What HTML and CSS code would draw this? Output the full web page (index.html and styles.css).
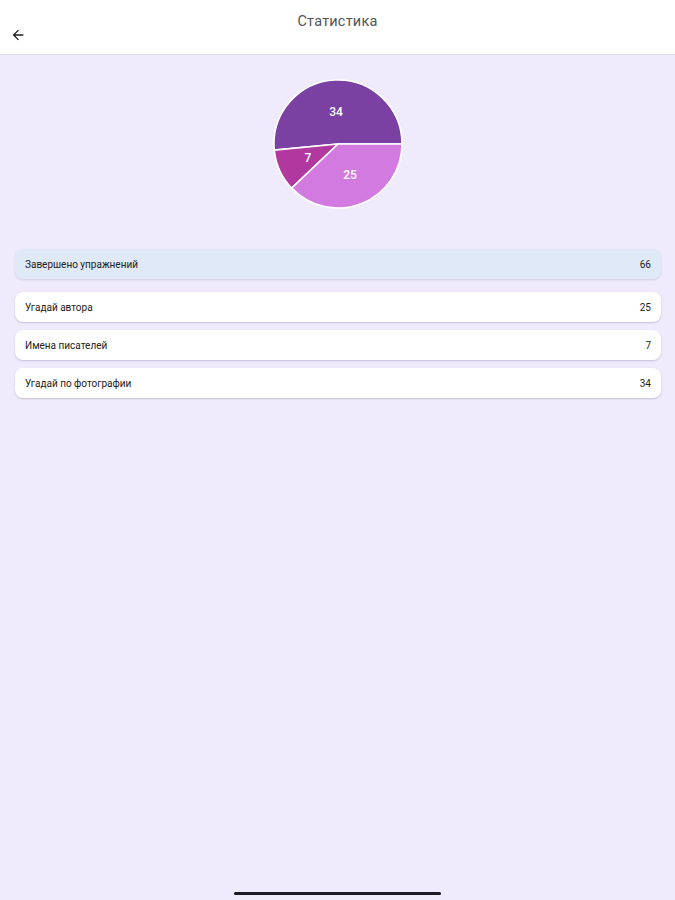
FILE: index.html
```html
<!DOCTYPE html>
<html lang="ru">
<head>
<meta charset="utf-8">
<link rel="stylesheet" href="styles.css">
</head>
<body>
<div class="page">
  <header class="topbar">
    <div class="title">Статистика</div>
    <button class="back" aria-label="Назад">
      <svg width="16" height="16" viewBox="0 0 24 24"><path d="M20 11H7.83l5.59-5.59L12 4l-8 8 8 8 1.41-1.41L7.83 13H20v-2z" fill="#1c1b1f"/></svg>
    </button>
  </header>
  <main class="content">
    <div class="chart">
      <svg width="130" height="130" viewBox="0 0 130 130">
        <path d="M65,65 L129,65 A64,64 0 1,0 1.29,71.08 Z" fill="#7a41a2" stroke="#fff" stroke-width="1.6" stroke-linejoin="round"/>
        <path d="M65,65 L1.29,71.08 A64,64 0 0,0 18.68,109.17 Z" fill="#b0389f" stroke="#fff" stroke-width="1.6" stroke-linejoin="round"/>
        <path d="M65,65 L18.68,109.17 A64,64 0 0,0 129,65 Z" fill="#d27ae0" stroke="#fff" stroke-width="1.6" stroke-linejoin="round"/>
        <text x="63" y="37" class="lbl">34</text>
        <text x="35" y="83" class="lbl">7</text>
        <text x="77" y="100" class="lbl">25</text>
      </svg>
    </div>
    <div class="row total"><span>Завершено упражнений</span><span>66</span></div>
    <div class="list">
      <div class="row"><span>Угадай автора</span><span>25</span></div>
      <div class="row"><span>Имена писателей</span><span>7</span></div>
      <div class="row"><span>Угадай по фотографии</span><span>34</span></div>
    </div>
  </main>
  <div class="homebar"></div>
</div>
</body>
</html>
```
FILE: styles.css
```css
* { box-sizing: border-box; }
html, body { margin: 0; padding: 0; }
body {
  font-family: Roboto, "Noto Sans", "Liberation Sans", sans-serif;
  background: #efebfc;
  color: #1c1b1f;
}
.page {
  min-height: 900px;
  display: flex;
  flex-direction: column;
}
.topbar {
  background: #fff;
  height: 54px;
  position: relative;
  box-shadow: 0 1px 1px rgba(0,0,0,0.05);
}
.title {
  text-align: center;
  font-size: 14.5px;
  color: #555;
  padding-top: 13px;
  letter-spacing: 0.2px;
}
.back {
  position: absolute;
  left: 10px;
  top: 27px;
  border: 0;
  background: none;
  padding: 0;
  width: 16px;
  height: 16px;
  display: flex;
}
.content {
  padding: 0 15px 0 15px;
  display: flex;
  flex-direction: column;
}
.chart {
  display: flex;
  justify-content: center;
  margin-top: 25px;
  margin-bottom: 40px;
}
.lbl {
  fill: #fff;
  font-size: 12px;
  font-weight: 500;
  text-anchor: middle;
  font-family: Roboto, "Liberation Sans", sans-serif;
}
.row {
  height: 30px;
  border-radius: 8px;
  background: #fff;
  display: flex;
  align-items: center;
  justify-content: space-between;
  padding: 0 10px 0 10px;
  font-size: 10px;
  color: #222;
  box-shadow: 0 1px 2px rgba(80,60,120,0.25);
  width: 646px;
}
.row.total {
  background: #dfe9f7;
  box-shadow: 0 1px 2px rgba(80,60,120,0.18);
}
.list {
  margin-top: 13px;
  display: flex;
  flex-direction: column;
  gap: 8px;
}
.homebar {
  margin-top: auto;
  align-self: center;
  width: 207px;
  height: 3px;
  border-radius: 2px;
  background: #1b1a24;
  margin-bottom: 5px;
}
```
